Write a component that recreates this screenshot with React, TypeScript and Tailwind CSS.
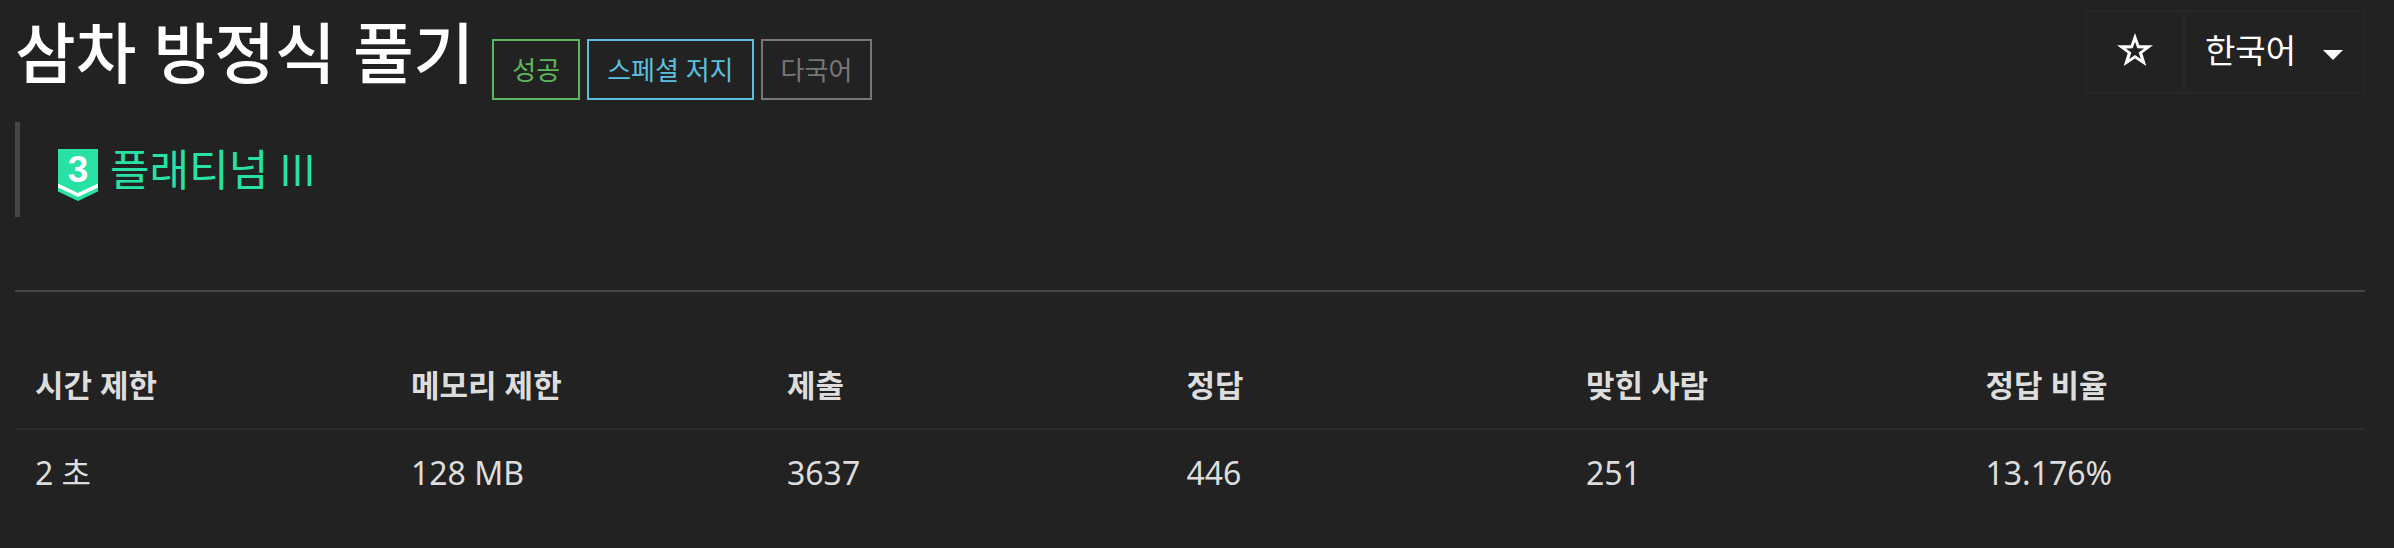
const labels = [
  { text: "성공", tone: "border-[#5cb85c] text-[#5cb85c]" },
  { text: "스페셜 저지", tone: "border-[#5bc0de] text-[#5bc0de]" },
  { text: "다국어", tone: "border-[#777777] text-[#777777]" },
];

const stats = [
  { name: "시간 제한", value: "2 초", width: "w-[16%]" },
  { name: "메모리 제한", value: "128 MB", width: "w-[16%]" },
  { name: "제출", value: "3637", width: "w-[17%]" },
  { name: "정답", value: "446", width: "w-[17%]" },
  { name: "맞힌 사람", value: "251", width: "w-[17%]" },
  { name: "정답 비율", value: "13.176%", width: "w-[17%]" },
];

function TierBadge() {
  return (
    <svg
      viewBox="0 0 40 52"
      className="mt-[10px] h-[52px] w-10 shrink-0 overflow-visible"
      role="img"
      aria-label="플래티넘 3"
    >
      <path d="M0 0H40V42.5L20 52L0 42.5Z" fill="#27e2a4" />
      <path d="M0 34.5L20 44L40 34.5V38.5L20 48L0 38.5Z" fill="#fff" />
      <text
        x="20"
        y="33"
        textAnchor="middle"
        fill="#fff"
        className="font-['Liberation_Sans',sans-serif] text-[37px] font-bold"
      >
        3
      </text>
    </svg>
  );
}

export default function App() {
  return (
    <main className="min-h-screen bg-[#222222] pr-[29px] pb-8 pl-[15px] pt-[10px] font-['Open_Sans','Noto_Sans_CJK_KR',sans-serif] text-[#dddddd]">
      <header className="flex items-start justify-between">
        <div className="flex items-start gap-[18px]">
          <h1 className="text-[66px] leading-[84px] font-medium text-white">삼차 방정식 풀기</h1>
          <ul className="mt-[29px] flex gap-[7px]">
            {labels.map((label) => (
              <li
                key={label.text}
                className={`border-2 px-[18px] pt-[13px] pb-3 text-[26px] leading-8 ${label.tone}`}
              >
                {label.text}
              </li>
            ))}
          </ul>
        </div>
        <div className="flex h-[84px] border-2 border-[#262626] text-white">
          <button type="button" aria-label="즐겨찾기" className="flex w-24 items-center justify-center">
            <svg viewBox="0 0 36 34" className="mb-1 h-[34px] w-9" aria-hidden="true">
              <path
                fill="#fff"
                fillRule="evenodd"
                d="M18 0L22.3 12.2L36 12.3L25.3 20.3L29.3 33L18 25.4L6.7 33L10.7 20.3L0 12.3L13.7 12.2ZM18 8.8L15.7 15.3L8.9 15.4L14.3 19.4L12.3 25.9L18 22L23.7 25.9L21.7 19.4L27.1 15.4L20.3 15.3Z"
              />
            </svg>
          </button>
          <div className="relative flex border-l-2 border-[#262626]">
            <select
              aria-label="언어"
              className="appearance-none bg-transparent pr-[66px] pb-0.5 pl-5 text-[33px] text-white"
            >
              <option>한국어</option>
            </select>
            <svg
              viewBox="0 0 20 10"
              className="pointer-events-none absolute top-[38px] right-5 h-[10px] w-5"
              aria-hidden="true"
            >
              <path d="M0 0H20L10 10Z" fill="#fff" />
            </svg>
          </div>
        </div>
      </header>

      <blockquote className="mt-[22px] flex h-[95px] items-center gap-3 border-l-[5px] border-[#464646] pl-[38px] text-[43px] text-[#27e2a4]">
        <TierBadge />
        <span className="leading-[60px]">플래티넘 III</span>
      </blockquote>

      <hr className="mt-[73px] border-t-2 border-[#464646]" />

      <table className="mt-[50px] w-full table-fixed border-collapse text-left font-['Noto_Sans','Noto_Sans_CJK_KR',sans-serif] text-[32px] leading-[46px]">
        <thead>
          <tr className="border-b-2 border-[#2c2c2c] text-[31px]">
            {stats.map((stat) => (
              <th key={stat.name} scope="col" className={`px-5 py-5 font-bold ${stat.width}`}>
                {stat.name}
              </th>
            ))}
          </tr>
        </thead>
        <tbody>
          <tr>
            {stats.map((stat) => (
              <td key={stat.name} className="px-5 py-5">
                {stat.value}
              </td>
            ))}
          </tr>
        </tbody>
      </table>
    </main>
  );
}
